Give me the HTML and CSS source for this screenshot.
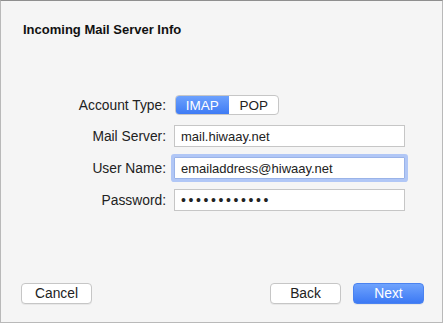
FILE: index.html
```html
<!DOCTYPE html>
<html lang="en">
<head>
  <meta charset="UTF-8">
  <title>Incoming Mail Server Info</title>
  <link rel="stylesheet" href="styles.css">
</head>
<body>
  <div class="window">
    <h1 class="title">Incoming Mail Server Info</h1>

    <form class="server-form">
      <label class="label">Account Type:</label>
      <div class="segmented">
        <span class="segment active">IMAP</span>
        <span class="segment">POP</span>
      </div>

      <label class="label" for="server">Mail Server:</label>
      <input class="field" id="server" type="text" value="mail.hiwaay.net">

      <label class="label" for="user">User Name:</label>
      <input class="field focused" id="user" type="text" value="emailaddress@hiwaay.net">

      <label class="label" for="pass">Password:</label>
      <input class="field secret" id="pass" type="password" value="secretpasswd">
    </form>

    <div class="footer">
      <button class="btn" type="button">Cancel</button>
      <div class="nav">
        <button class="btn" type="button">Back</button>
        <button class="btn primary" type="button">Next</button>
      </div>
    </div>
  </div>
</body>
</html>
```

FILE: styles.css
```css
* { box-sizing: border-box; }
body {
  margin: 0;
  background: #fff;
  font-family: 'Liberation Sans', Arial, sans-serif;
  font-size: 13px;
  color: #222;
}
.window {
  width: 443px;
  height: 323px;
  background: #f5f5f5;
  border: 1px solid #b9b9b9;
  border-top-color: #8f8f8f;
  display: flex;
  flex-direction: column;
  padding: 21px 18px 18px 20px;
}
.title {
  margin: 0;
  font-size: 13px;
  line-height: 16px;
  font-weight: bold;
  color: #111;
  padding-left: 2px;
}
.server-form {
  display: grid;
  grid-template-columns: 145px 231px;
  column-gap: 8px;
  row-gap: 10px;
  align-items: center;
  margin-top: 57px;
}
.label {
  text-align: right;
  font-size: 13.8px;
  line-height: 16px;
  color: #222;
  padding-top: 1px;
}
.segmented {
  display: flex;
  height: 20px;
  width: 104px;
  margin-left: 1px;
  border: 1px solid #c6c6c6;
  border-radius: 4px;
  background: #fff;
  overflow: hidden;
}
.segment {
  display: flex;
  align-items: center;
  justify-content: center;
  width: 49px;
  font-size: 13.5px;
  color: #222;
}
.segment.active {
  width: 55px;
  margin: -1px 0 -1px -1px;
  color: #fff;
  background: linear-gradient(#6fa3fd, #3c79f4);
}
.field {
  height: 22px;
  margin: 0;
  padding: 0 6px;
  border: 1px solid #c6c6c6;
  border-radius: 0;
  background: #fff;
  font-family: inherit;
  font-size: 13px;
  color: #222;
  outline: none;
}
.field.focused {
  border-color: #9ab3e8;
  box-shadow: 0 0 0 3px rgba(120, 160, 245, 0.55);
  border-radius: 1px;
}
.field.secret {
  letter-spacing: 2.6px;
  font-size: 14px;
}
.footer {
  margin-top: auto;
  display: flex;
  justify-content: space-between;
  align-items: center;
}
.nav {
  display: flex;
  gap: 12px;
}
.btn {
  width: 71px;
  height: 21px;
  padding: 0;
  border: 1px solid #c6c6c6;
  border-radius: 4px;
  background: #fff;
  font-family: inherit;
  font-size: 13.8px;
  color: #222;
  box-shadow: 0 1px 0 rgba(0, 0, 0, 0.05);
}
.btn.primary {
  border-color: #4b83f0;
  color: #fff;
  background: linear-gradient(#6fa3fd, #3c79f4);
}
```
